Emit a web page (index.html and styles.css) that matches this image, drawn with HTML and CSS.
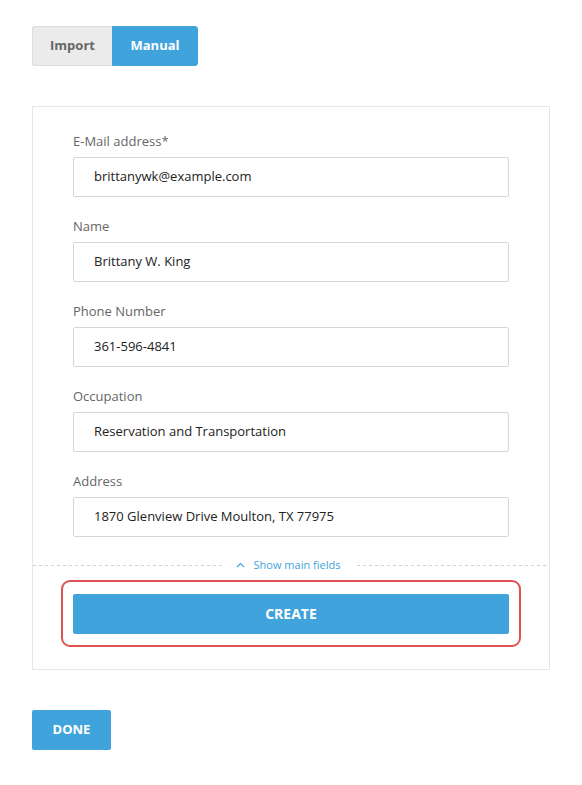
FILE: index.html
```html
<!DOCTYPE html>
<html>
<head>
<meta charset="utf-8">
<link rel="stylesheet" href="styles.css">
</head>
<body>
<div class="page">
  <div class="tabs">
    <button class="tab tab-import">Import</button>
    <button class="tab tab-manual">Manual</button>
  </div>
  <div class="card">
    <div class="field">
      <label class="label">E-Mail address*</label>
      <div class="input">brittanywk@example.com</div>
    </div>
    <div class="field">
      <label class="label">Name</label>
      <div class="input">Brittany W. King</div>
    </div>
    <div class="field">
      <label class="label">Phone Number</label>
      <div class="input">361-596-4841</div>
    </div>
    <div class="field">
      <label class="label">Occupation</label>
      <div class="input">Reservation and Transportation</div>
    </div>
    <div class="field last">
      <label class="label">Address</label>
      <div class="input">1870 Glenview Drive Moulton, TX 77975</div>
    </div>
    <div class="divider">
      <span class="toggle">
        <svg class="chev" width="9" height="6" viewBox="0 0 9 6"><path d="M1 5 L4.5 1.5 L8 5" fill="none" stroke="#41a3dc" stroke-width="1.2"/></svg>
        Show main fields
      </span>
    </div>
    <div class="highlight">
      <button class="btn create">CREATE</button>
    </div>
  </div>
  <button class="btn done">DONE</button>
</div>
</body>
</html>
```

FILE: styles.css
```css
* { box-sizing: border-box; }
html, body { margin: 0; padding: 0; background: #fff; }
body { font-family: "Open Sans", "Liberation Sans", sans-serif; color: #333; }
.page { padding: 26px 32px; }
.tabs { display: flex; }
.tab {
  height: 40px;
  font-family: inherit;
  font-size: 13px;
  font-weight: 700;
  border: 1px solid #dcdcdc;
  padding: 0 0 2px;
  margin: 0;
}
.tab-import {
  width: 80px;
  background: #ebebeb;
  color: #666;
  border-radius: 3px 0 0 3px;
  border-right: none;
}
.tab-manual {
  width: 86px;
  background: #41a3dc;
  color: #fff;
  border-color: #41a3dc;
  border-radius: 0 3px 3px 0;
}
.card {
  margin-top: 40px;
  width: 518px;
  border: 1px solid #e6e6e6;
  padding: 24px 40px 22px;
}
.field { margin-bottom: 19px; }
.field.last { margin-bottom: 18px; }
.label {
  display: block;
  font-size: 13px;
  line-height: 20px;
  color: #666;
  margin-bottom: 6px;
}
.input {
  height: 40px;
  border: 1px solid #d6d6d6;
  border-radius: 2px;
  padding: 0 20px 2px;
  display: flex;
  align-items: center;
  font-size: 13px;
  color: #222;
}
.divider {
  margin: 0 -40px;
  height: 20px;
  display: flex;
  align-items: center;
  justify-content: center;
  background-image: linear-gradient(to right, #cfcfcf 50%, transparent 50%);
  background-size: 6px 1px;
  background-repeat: repeat-x;
  background-position: 0 10px;
}
.toggle {
  background: #fff;
  padding: 0 17px 0 11px;
  font-size: 11px;
  color: #41a3dc;
  display: flex;
  align-items: center;
  gap: 9px;
  line-height: 20px;
}
.highlight {
  margin: 5px -12px 0;
  border: 2px solid #e05252;
  border-radius: 9px;
  padding: 12px 10px 11px;
}
.btn {
  height: 40px;
  border: none;
  border-radius: 2px;
  background: #41a3dc;
  color: #fff;
  font-family: inherit;
  font-size: 13px;
  font-weight: 700;
  display: block;
  padding: 0 0 2px;
}
.create { width: 100%; font-size: 14px; }
.done { margin-top: 40px; width: 79px; }
```
